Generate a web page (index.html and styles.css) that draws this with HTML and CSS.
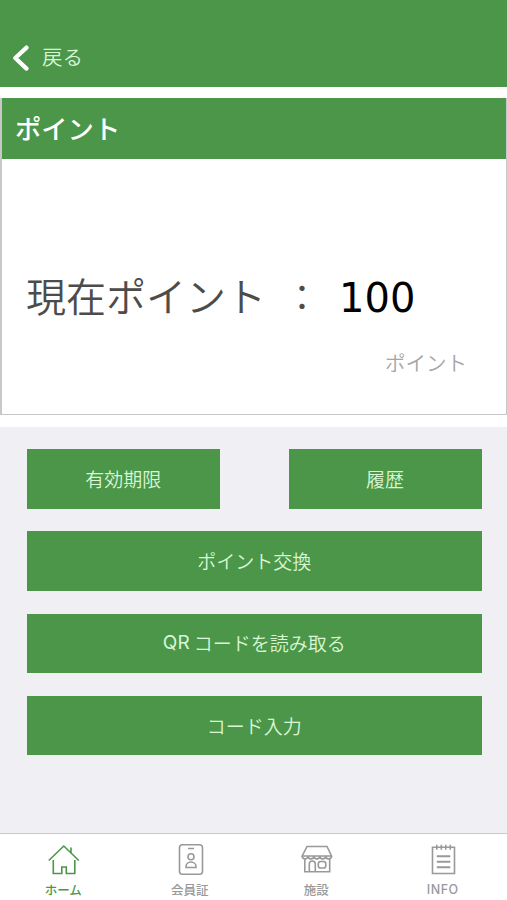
FILE: index.html
```html
<!DOCTYPE html>
<html lang="ja">
<head>
<meta charset="utf-8">
<title>ポイント</title>
<link rel="stylesheet" href="styles.css">
</head>
<body>
<header class="nav">
  <svg class="chevron" viewBox="0 0 18 28"><path d="M15.500 3.600 4.300 14l11.200 10.600"/></svg>
  <span class="back">戻る</span>
</header>
<section class="card">
  <h1 class="card-title">ポイント</h1>
  <div class="balance">
    <span class="label">現在ポイント</span><span class="colon">：</span><span class="amount">100</span>
  </div>
  <p class="unit">ポイント</p>
</section>
<main class="actions">
  <div class="pair">
    <button class="btn">有効期限</button>
    <button class="btn">履歴</button>
  </div>
  <button class="btn">ポイント交換</button>
  <button class="btn"><span class="latin">QR</span>コードを読み取る</button>
  <button class="btn">コード入力</button>
</main>
<nav class="tabs">
  <a class="tab active">
    <svg class="icon" viewBox="0 0 34 34"><path d="M2.800 18.500 17.800 4l15 14.500M25 10.500V5.500M7.300 18V31.500h8.500v-6.500h4.500v6.500h8.500V18"/></svg>
    <span>ホーム</span>
  </a>
  <a class="tab">
    <svg class="icon" viewBox="0 0 34 34"><rect x="6.500" y="2.800" width="23" height="29.400" rx="3"/><path d="M15 6.500h6M13 25.500v-1a5 4.500 0 0 1 10 0v1z"/><circle cx="18" cy="14.800" r="3"/></svg>
    <span>会員証</span>
  </a>
  <a class="tab">
    <svg class="icon" viewBox="0 0 34 34"><path d="M8 4.500h20l4.500 9.500H3.200zM3.200 14c0 3.800 5.800 3.800 5.800 0 0 3.800 5.900 3.800 5.900 0 0 3.800 5.900 3.800 5.900 0 0 3.800 5.900 3.800 5.900 0 0 3.800 5.800 3.800 5.800 0M5.800 16.500v13.300h24.900V16.500M10.300 29.500V22a3 3 0 0 1 6 0v7.500"/><rect x="19.300" y="19.500" width="7.500" height="6.500" rx="2.300"/></svg>
    <span>施設</span>
  </a>
  <a class="tab">
    <svg class="icon" viewBox="0 0 34 34"><path d="M6.500 5.300h22v26.200h-22z"/><path class="bold" d="M10.800 14.200h13.500M10.800 19.700h13.500M10.800 25.200h13.500"/><path d="M10.800 2.800v5M15.300 2.800v5M19.800 2.800v5M24.300 2.800v5"/></svg>
    <span class="info">INFO</span>
  </a>
</nav>
</body>
</html>
```
FILE: styles.css
```css
* { box-sizing: border-box; }
body {
  margin: 0;
  height: 900px;
  display: flex;
  flex-direction: column;
  background: #fff;
  font-family: "Noto Sans CJK JP", sans-serif;
  overflow: hidden;
}
.nav {
  height: 87px;
  padding: 28px 0 0 11px;
  display: flex;
  align-items: center;
  background: #4b9648;
  color: #d6f5d3;
}
.chevron {
  width: 18px;
  height: 28px;
  fill: none;
  stroke: #fff;
  stroke-width: 4.200;
  stroke-linecap: round;
  stroke-linejoin: round;
}
.back {
  margin: 0 0 3px 13px;
  font-size: 20.500px;
  font-weight: 350;
}
.card {
  height: 317px;
  margin: 11px 0 12px;
  border: solid #c8c8c8;
  border-width: 0 1px 1px 2px;
}
.card-title {
  height: 61px;
  margin: 0;
  padding-left: 13px;
  background: #4b9648;
  color: #fff;
  font-size: 26.300px;
  font-weight: 500;
  line-height: 59px;
}
.balance {
  display: flex;
  align-items: center;
  height: 60px;
  margin-top: 106px;
  padding-left: 24px;
  color: #4c4c4c;
  font-size: 40px;
  font-weight: 350;
  white-space: nowrap;
}
.label { width: 240px; }
.colon { width: 73px; padding-left: 18px; font-size: 36px; }
.amount {
  padding-top: 5px;
  color: #000;
  font-family: "DejaVu Sans", sans-serif;
  font-size: 40px;
  font-weight: 400;
}
.unit {
  margin: 22px 39px 0 0;
  color: #a6a6a6;
  font-size: 20.500px;
  font-weight: 350;
  line-height: 31px;
  text-align: right;
}
.actions {
  flex: 1;
  display: flex;
  flex-direction: column;
  gap: 22.700px;
  padding: 22px 25.500px 0 27px;
  background: #efeff4;
}
.pair {
  display: grid;
  grid-template-columns: 1fr 1fr;
  gap: 69px;
}
.btn {
  height: 59.600px;
  padding: 0;
  border: 0;
  display: flex;
  align-items: center;
  justify-content: center;
  background: #4b9648;
  color: #d9f7d6;
  font: 350 19px/30px "Noto Sans CJK JP", sans-serif;
}
.latin {
  margin-right: 4px;
  font-family: Inter, sans-serif;
  font-weight: 400;
}
.tabs {
  height: 67px;
  border-top: 1px solid #c9c9cb;
  display: grid;
  grid-template-columns: repeat(4, 126.500px);
  background: #fff;
  color: #999;
}
.tab {
  display: flex;
  flex-direction: column;
  align-items: center;
  padding-top: 8px;
  font-size: 12.500px;
  font-weight: 500;
  line-height: 18px;
}
.active { color: #4b9648; }
.icon {
  width: 34px;
  height: 34px;
  margin-bottom: 5px;
  fill: none;
  stroke: currentColor;
  stroke-width: 1.600;
}
.bold { stroke-width: 2; }
.info {
  font-family: Inter, sans-serif;
  letter-spacing: 0.500px;
}
```
